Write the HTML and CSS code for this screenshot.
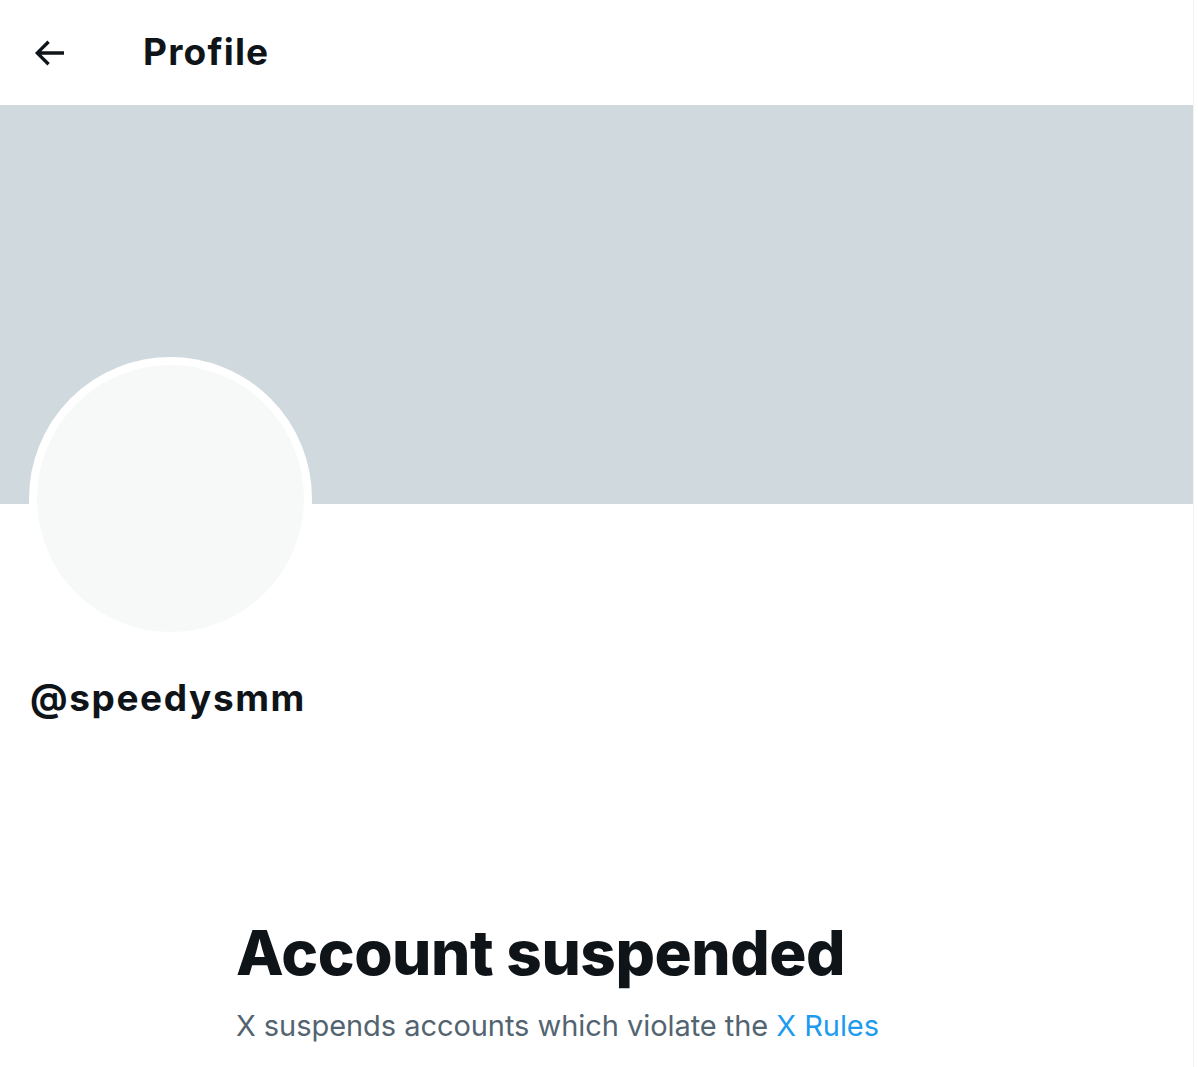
FILE: index.html
```html
<!DOCTYPE html>
<html lang="en">
<head>
<meta charset="utf-8">
<title>Profile</title>
<link rel="stylesheet" href="styles.css">
</head>
<body>
<main class="column">
  <header class="topbar">
    <button class="back" aria-label="Back">
      <svg viewBox="0 0 24 24" width="40" height="40"><path d="M7.414 13l5.043 5.04-1.414 1.42L3.586 12l7.457-7.46 1.414 1.42L7.414 11H21v2H7.414z" fill="#0f1419"/></svg>
    </button>
    <h1 class="title">Profile</h1>
  </header>
  <div class="banner"></div>
  <div class="avatar-row">
    <div class="avatar"></div>
  </div>
  <div class="handle">@speedysmm</div>
  <section class="empty">
    <h2 class="empty-title">Account suspended</h2>
    <p class="empty-text">X suspends accounts which violate the <a class="link" href="#">X Rules</a></p>
  </section>
</main>
</body>
</html>
```
FILE: styles.css
```css
html, body {
  margin: 0;
  padding: 0;
  background: #ffffff;
}
body {
  font-family: Inter, "Noto Sans", "Liberation Sans", sans-serif;
  color: #0f1419;
}
.column {
  width: 1193px;
  min-height: 1067px;
  border-right: 1px solid #eff3f4;
  box-sizing: content-box;
}
.topbar {
  height: 105px;
  display: flex;
  align-items: center;
}
.back {
  border: 0;
  background: none;
  padding: 0;
  margin-left: 29px;
  width: 40px;
  height: 40px;
  display: flex;
}
.title {
  margin: -2px 0 0 74px;
  font-size: 37px;
  font-weight: 700;
  letter-spacing: 1.2px;
  line-height: 1;
}
.banner {
  height: 399px;
  background: #cfd9de;
}
.avatar-row {
  padding-left: 29px;
  margin-top: -147px;
}
.avatar {
  width: 267px;
  height: 267px;
  border: 8px solid #ffffff;
  border-radius: 50%;
  background: #f7f9f9;
}
.handle {
  margin: 34px 0 0 30px;
  font-size: 37px;
  font-weight: 700;
  line-height: 48px;
  letter-spacing: 1.6px;
}
.empty {
  padding: 193px 0 0 236px;
}
.empty-title {
  margin: 0;
  font-size: 62px;
  font-weight: 800;
  line-height: 76px;
  letter-spacing: -0.45px;
}
.empty-text {
  margin: 16px 0 0;
  font-size: 29px;
  line-height: 38px;
  color: #536471;
  letter-spacing: -0.05px;
}
.link {
  color: #1d9bf0;
  text-decoration: none;
}
```
